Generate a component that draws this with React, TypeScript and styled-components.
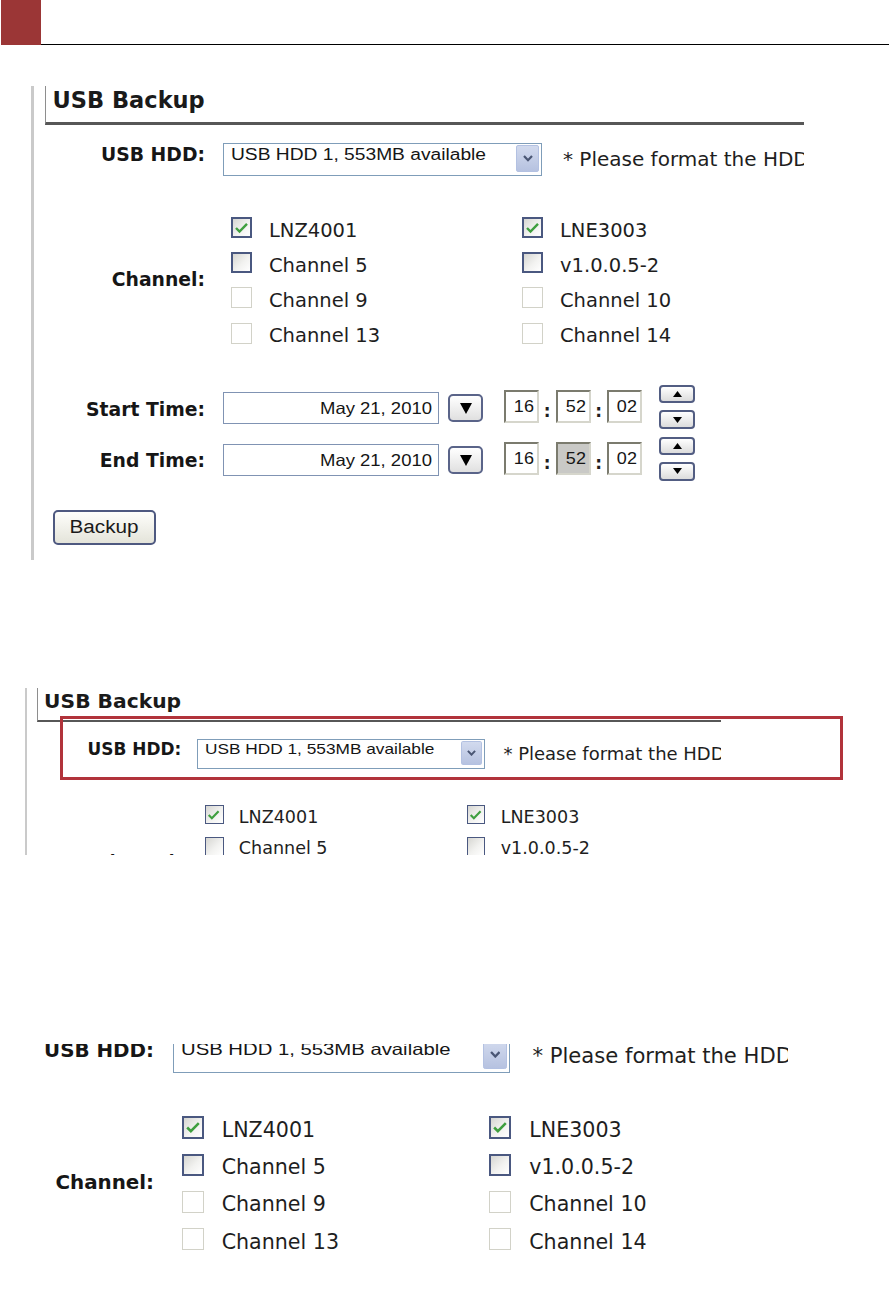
import React from "react";
import styled, { createGlobalStyle } from "styled-components";

const SANS = `"DejaVu Sans", Verdana, sans-serif`;
const ARIAL = `"Liberation Sans", Arial, sans-serif`;

const GlobalStyle = createGlobalStyle`
  html, body { margin: 0; padding: 0; background: #ffffff; }
  body { font-family: ${SANS}; color: #1e1e1e; }
  #root { width: 889px; height: 1290px; overflow: hidden; }
`;

const Page = styled.div`
  width: 889px;
  height: 1290px;
  display: flex;
  flex-direction: column;
  overflow: hidden;
  background: #ffffff;
`;

const Header = styled.header`
  display: flex;
  height: 45px;
  flex-shrink: 0;
  padding-left: 1px;
`;

const HeaderTab = styled.div`
  width: 40px;
  height: 45px;
  background: #9b3636;
`;

const HeaderRule = styled.div`
  flex: 1;
  height: 45px;
  box-sizing: border-box;
  border-bottom: 1px solid #000000;
`;

/* ---------- a cropped, scaled screenshot ---------- */

const ShotWrap = styled.div<{ $top: number; $left: number }>`
  position: relative;
  flex-shrink: 0;
  align-self: flex-start;
  margin-top: ${(p) => p.$top}px;
  margin-left: ${(p) => p.$left}px;
`;

const ShotClip = styled.div<{ $w: number; $h: number }>`
  width: ${(p) => p.$w}px;
  height: ${(p) => p.$h}px;
  overflow: hidden;
`;

const ShotZoom = styled.div<{ $zoom: number }>`
  display: flow-root;
  zoom: ${(p) => p.$zoom};
`;

const ShotCanvas = styled.div<{ $cx: number; $cy: number }>`
  width: 776px;
  height: 478px;
  margin-left: ${(p) => -p.$cx}px;
  margin-top: ${(p) => -p.$cy}px;
`;

const Callout = styled.div`
  position: absolute;
  left: 37px;
  top: 30px;
  width: 783px;
  height: 64px;
  box-sizing: border-box;
  border: 3px solid #b1333b;
  pointer-events: none;
`;

/* ---------- the form ---------- */

const Sheet = styled.div`
  box-sizing: border-box;
  width: 773px;
  height: 474px;
  margin: 2px 0 0 3px;
  border-left: 3px solid #cacaca;
  padding-left: 11px;
  display: flex;
  flex-direction: column;
`;

const TitleBar = styled.div`
  box-sizing: border-box;
  height: 38.5px;
  border-left: 1.5px solid #8e8e8e;
  border-bottom: 3px solid #575757;
  padding: 3.4px 0 0 6.5px;
  font: bold 22.5px/1 ${SANS};
  color: #1a1a1a;
  white-space: nowrap;
`;

const FieldRow = styled.div<{ $mt: number; $align?: string }>`
  display: grid;
  grid-template-columns: 160px max-content;
  column-gap: 18px;
  align-items: ${(p) => p.$align ?? "center"};
  margin-top: ${(p) => p.$mt}px;
`;

const FieldLabel = styled.div<{ $pt?: number }>`
  text-align: right;
  font: bold 18.8px/1 ${SANS};
  color: #161616;
  padding-top: ${(p) => p.$pt ?? 0}px;
  white-space: nowrap;
`;

const Controls = styled.div<{ $align?: string }>`
  display: flex;
  align-items: ${(p) => p.$align ?? "flex-start"};
`;

const Stretch = styled.span<{ $sx: number; $origin?: string }>`
  display: inline-block;
  white-space: nowrap;
  transform: scaleX(${(p) => p.$sx});
  transform-origin: ${(p) => p.$origin ?? "left"} center;
`;

const Select = styled.div`
  box-sizing: border-box;
  width: 319px;
  height: 33px;
  border: 1px solid #7f9db9;
  background: #ffffff;
  display: flex;
  justify-content: space-between;
  align-items: flex-start;
  padding: 1px 2px 0 7px;
`;

const SelectValue = styled(Stretch)`
  font: 16px/1 ${ARIAL};
  color: #151515;
  margin-top: 1.5px;
`;

const SelectArrow = styled.span`
  box-sizing: border-box;
  width: 23px;
  height: 27px;
  border: 1px solid #b3c1e2;
  border-radius: 2px;
  background: linear-gradient(180deg, #d2daee 0%, #b6c2e0 100%);
  display: flex;
  align-items: center;
  justify-content: center;
`;

const Note = styled.span`
  font: 20px/1 ${SANS};
  color: #1e1e1e;
  margin: 6.4px 0 0 21px;
  white-space: nowrap;
`;

const CheckGrid = styled.div`
  display: grid;
  grid-template-columns: 291px 291px;
  grid-template-rows: repeat(4, 21px);
  row-gap: 14.2px;
  padding-left: 8px;
`;

const CheckItem = styled.label`
  display: flex;
  align-items: center;
  gap: 17px;
  height: 21px;
`;

type BoxState = "on" | "off" | "dis";

const CheckBox = styled.span<{ $state: BoxState }>`
  box-sizing: border-box;
  width: 21px;
  height: 21px;
  flex-shrink: 0;
  display: flex;
  align-items: center;
  justify-content: center;
  border: ${(p) =>
    p.$state === "dis" ? "1.5px solid #d2d2c8" : "2px solid #4a5880"};
  background: ${(p) =>
    p.$state === "dis"
      ? "#ffffff"
      : "linear-gradient(135deg, #d6d6d2 0%, #f2f2f0 55%, #ffffff 100%)"};
`;

const CheckText = styled.span`
  font: 19.5px/21px ${SANS};
  color: #1e1e1e;
  margin-top: 5px;
  white-space: nowrap;
`;

const DateField = styled.div`
  box-sizing: border-box;
  width: 216px;
  height: 32px;
  margin-top: 3px;
  border: 1px solid #8093b3;
  background: #ffffff;
  display: flex;
  align-items: center;
  justify-content: flex-end;
  padding-right: 6px;
`;

const DateValue = styled(Stretch)`
  font: 16.5px/1 ${ARIAL};
  color: #151515;
`;

const DropButton = styled.span`
  box-sizing: border-box;
  width: 35px;
  height: 28px;
  margin: 3px 0 0 9px;
  border: 2px solid #5a6489;
  border-radius: 5px;
  background: linear-gradient(180deg, #ffffff 0%, #e0e0e0 100%);
  display: flex;
  align-items: center;
  justify-content: center;
`;

const TimeGroup = styled.div`
  display: flex;
  align-items: stretch;
  margin-left: 21px;
`;

const TimeBox = styled.span<{ $active?: boolean }>`
  box-sizing: border-box;
  width: 35px;
  height: 33px;
  border: 2px solid;
  border-color: #7b7b6e #d6d6cc #d6d6cc #7b7b6e;
  background: ${(p) => (p.$active ? "#c9c9c6" : "#ffffff")};
  display: flex;
  align-items: center;
  justify-content: flex-end;
  padding-right: 3px;
`;

const TimeValue = styled(Stretch)`
  font: 17px/1 ${ARIAL};
  color: #151515;
`;

const TimeSep = styled.span`
  width: 16.5px;
  text-align: center;
  align-self: flex-end;
  padding-bottom: 3px;
  font: bold 17px/1 ${SANS};
  color: #1e1e1e;
`;

const Spinner = styled.div`
  display: flex;
  flex-direction: column;
  gap: 7px;
  margin-left: 17px;
`;

const SpinButton = styled.span`
  box-sizing: border-box;
  width: 36px;
  height: 18.5px;
  border: 2px solid #525d82;
  border-radius: 4px;
  background: linear-gradient(180deg, #ffffff 0%, #dcdcdc 100%);
  display: flex;
  align-items: center;
  justify-content: center;
`;

const BackupButton = styled.button`
  box-sizing: border-box;
  width: 103px;
  height: 35px;
  margin: 29.3px 0 0 8px;
  padding: 0;
  align-self: flex-start;
  border: 2px solid #4e5980;
  border-radius: 5px;
  background: linear-gradient(180deg, #fefefb 0%, #e4e4da 100%);
  display: flex;
  align-items: center;
  justify-content: center;
  cursor: default;
`;

const ButtonText = styled(Stretch)`
  font: 18px/1 ${ARIAL};
  color: #1a1a1a;
`;

/* ---------- icons ---------- */

const Chevron = () => (
  <svg width="10" height="7" viewBox="0 0 10 7" aria-hidden="true">
    <polyline points="1,1 5,5.2 9,1" fill="none" stroke="#4a5674" strokeWidth="2.2" />
  </svg>
);

const Tick = () => (
  <svg width="17" height="17" viewBox="0 0 17 17" aria-hidden="true">
    <path d="M3 9 L6.5 12.5 L14 4.8" fill="none" stroke="#3f9f3f" strokeWidth="2.4" />
  </svg>
);

const TriangleDown = ({ w, h }: { w: number; h: number }) => (
  <svg width={w} height={h} viewBox={`0 0 ${w} ${h}`} aria-hidden="true">
    <polygon points={`0,0 ${w},0 ${w / 2},${h}`} fill="#000000" />
  </svg>
);

const TriangleUp = ({ w, h }: { w: number; h: number }) => (
  <svg width={w} height={h} viewBox={`0 0 ${w} ${h}`} aria-hidden="true">
    <polygon points={`0,${h} ${w},${h} ${w / 2},0`} fill="#000000" />
  </svg>
);

/* ---------- data ---------- */

const channels: { name: string; state: BoxState }[] = [
  { name: "LNZ4001", state: "on" },
  { name: "LNE3003", state: "on" },
  { name: "Channel 5", state: "off" },
  { name: "v1.0.0.5-2", state: "off" },
  { name: "Channel 9", state: "dis" },
  { name: "Channel 10", state: "dis" },
  { name: "Channel 13", state: "dis" },
  { name: "Channel 14", state: "dis" },
];

function TimeRow({ label, mt, activeMinute }: { label: string; mt: number; activeMinute?: boolean }) {
  return (
    <FieldRow $mt={mt}>
      <FieldLabel $pt={6}>{label}</FieldLabel>
      <Controls $align="center">
        <DateField>
          <DateValue $sx={1.12} $origin="right">May 21, 2010</DateValue>
        </DateField>
        <DropButton>
          <TriangleDown w={12} h={11} />
        </DropButton>
        <TimeGroup>
          <TimeBox>
            <TimeValue $sx={1.06} $origin="right">16</TimeValue>
          </TimeBox>
          <TimeSep>:</TimeSep>
          <TimeBox $active={activeMinute}>
            <TimeValue $sx={1.06} $origin="right">52</TimeValue>
          </TimeBox>
          <TimeSep>:</TimeSep>
          <TimeBox>
            <TimeValue $sx={1.06} $origin="right">02</TimeValue>
          </TimeBox>
        </TimeGroup>
        <Spinner>
          <SpinButton>
            <TriangleUp w={9} h={6} />
          </SpinButton>
          <SpinButton>
            <TriangleDown w={9} h={6} />
          </SpinButton>
        </Spinner>
      </Controls>
    </FieldRow>
  );
}

type FormView = {
  title: boolean;
  channelRows: number;
  times: boolean;
};

function UsbBackupForm({ view }: { view: FormView }) {
  const visibleChannels = channels.slice(0, view.channelRows * 2);
  return (
    <Sheet>
      <TitleBar>{view.title ? "USB Backup" : null}</TitleBar>
      <FieldRow $mt={18.5} $align="start">
        <FieldLabel $pt={2.5}>USB HDD:</FieldLabel>
        <Controls>
          <Select>
            <SelectValue $sx={1.2}>USB HDD 1, 553MB available</SelectValue>
            <SelectArrow>
              <Chevron />
            </SelectArrow>
          </Select>
          <Note>* Please format the HDD</Note>
        </Controls>
      </FieldRow>
      <FieldRow $mt={41}>
        <FieldLabel>Channel:</FieldLabel>
        <CheckGrid>
          {visibleChannels.map((c) => (
            <CheckItem key={c.name}>
              <CheckBox $state={c.state}>{c.state === "on" && <Tick />}</CheckBox>
              <CheckText>{c.name}</CheckText>
            </CheckItem>
          ))}
        </CheckGrid>
      </FieldRow>
      {view.times && (
        <>
          <TimeRow label="Start Time:" mt={41.4} />
          <TimeRow label="End Time:" mt={7.7} activeMinute />
          <BackupButton type="button">
            <ButtonText $sx={1.15} $origin="center">Backup</ButtonText>
          </BackupButton>
        </>
      )}
    </Sheet>
  );
}

type ShotProps = {
  top: number;
  left: number;
  w: number;
  h: number;
  zoom: number;
  cx: number;
  cy: number;
  view: FormView;
  children?: React.ReactNode;
};

function Shot({ top, left, w, h, zoom, cx, cy, view, children }: ShotProps) {
  return (
    <ShotWrap $top={top} $left={left}>
      <ShotClip $w={w} $h={h}>
        <ShotZoom $zoom={zoom}>
          <ShotCanvas $cx={cx} $cy={cy}>
            <UsbBackupForm view={view} />
          </ShotCanvas>
        </ShotZoom>
      </ShotClip>
      {children}
    </ShotWrap>
  );
}

export default function App() {
  return (
    <Page>
      <GlobalStyle />
      <Header>
        <HeaderTab />
        <HeaderRule />
      </Header>
      <Shot
        top={39}
        left={28}
        w={776}
        h={478}
        zoom={1}
        cx={0}
        cy={0}
        view={{ title: true, channelRows: 4, times: true }}
      />
      <Shot
        top={123.8}
        left={22.7}
        w={698.4}
        h={169.2}
        zoom={0.9}
        cx={0}
        cy={0}
        view={{ title: true, channelRows: 2, times: false }}
      >
        <Callout />
      </Shot>
      <Shot
        top={189.5}
        left={0}
        w={787.5}
        h={217.5}
        zoom={1.057}
        cx={31.1}
        cy={65}
        view={{ title: false, channelRows: 4, times: false }}
      />
    </Page>
  );
}
